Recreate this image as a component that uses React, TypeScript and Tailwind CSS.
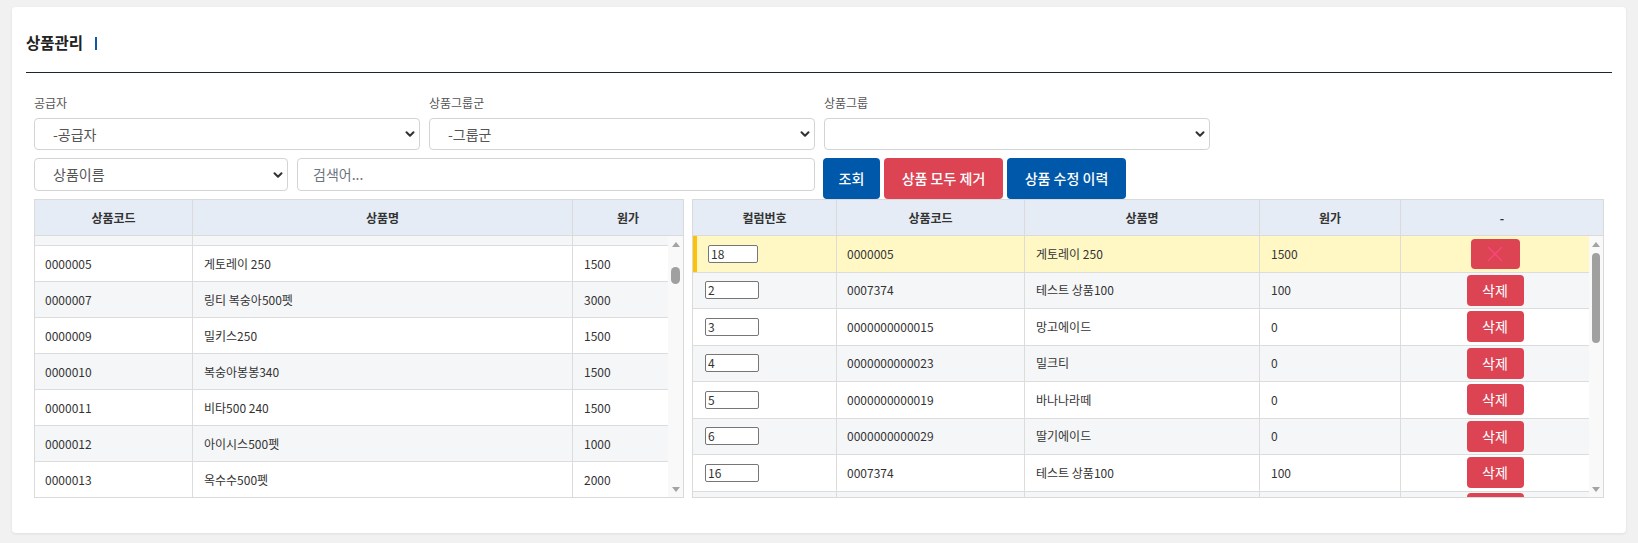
import React from 'react';
import { ChevronDown, X } from 'lucide-react';

const font = { fontFamily: '"Noto Sans CJK KR", "Noto Sans", sans-serif' };

const products = [
  { code: '0000005', name: '게토레이 250', price: '1500' },
  { code: '0000007', name: '링티 복숭아500펫', price: '3000' },
  { code: '0000009', name: '밀키스250', price: '1500' },
  { code: '0000010', name: '복숭아봉봉340', price: '1500' },
  { code: '0000011', name: '비타500 240', price: '1500' },
  { code: '0000012', name: '아이시스500펫', price: '1000' },
  { code: '0000013', name: '옥수수500펫', price: '2000' },
];

const selected = [
  { no: '2', code: '0007374', name: '테스트 상품100', price: '100' },
  { no: '3', code: '0000000000015', name: '망고에이드', price: '0' },
  { no: '4', code: '0000000000023', name: '밀크티', price: '0' },
  { no: '5', code: '0000000000019', name: '바나나라떼', price: '0' },
  { no: '6', code: '0000000000029', name: '딸기에이드', price: '0' },
  { no: '16', code: '0007374', name: '테스트 상품100', price: '100' },
];

function FakeSelect({ text, width }: { text: string; width: string }) {
  return (
    <div className={`${width} h-[32px] shrink-0 flex items-center justify-between border border-[#d4d4d4] rounded-[4px] bg-white pl-[18px] pr-[2px]`}>
      <span className="text-[14px] text-[#555]">{text}</span>
      <ChevronDown size={14} strokeWidth={3.5} className="text-[#333]" />
    </div>
  );
}

function Scrollbar({ thumbTop, thumbHeight, thumbWidth, width }: { thumbTop: string; thumbHeight: string; thumbWidth: string; width: string }) {
  return (
    <div className={`${width} h-full shrink-0 flex flex-col items-center bg-[#f9f9f9]`}>
      <div className="h-[16px] flex items-center justify-center">
        <div className="w-0 h-0 border-l-[4px] border-r-[4px] border-b-[5px] border-l-transparent border-r-transparent border-b-[#a3a3a3]" />
      </div>
      <div className={`${thumbTop} ${thumbHeight} ${thumbWidth} rounded-full bg-[#a0a0a0]`} />
      <div className="flex-1" />
      <div className="h-[16px] flex items-center justify-center">
        <div className="w-0 h-0 border-l-[4px] border-r-[4px] border-t-[5px] border-l-transparent border-r-transparent border-t-[#a3a3a3]" />
      </div>
    </div>
  );
}

function LeftTable() {
  return (
    <div className="w-[650px] shrink-0 h-[299px] border border-[#dadada] bg-white flex flex-col">
      <div className="h-[36px] shrink-0 flex bg-[#e5ecf5] border-b border-[#dadada] text-[12px] font-bold text-[#333]">
        <div className="w-[158px] flex items-center justify-center border-r border-[#dadada]">상품코드</div>
        <div className="w-[380px] flex items-center justify-center border-r border-[#dadada]">상품명</div>
        <div className="flex-1 flex items-center justify-center">원가</div>
      </div>
      <div className="h-[261px] flex overflow-hidden">
        <div className="flex-1 flex flex-col overflow-hidden">
          <div className="h-[10px] shrink-0 flex bg-[#f5f6f8] border-b border-[#dcdcdc]">
            <div className="w-[158px] border-r border-[#dcdcdc]" />
            <div className="w-[380px] border-r border-[#dcdcdc]" />
            <div className="flex-1" />
          </div>
          {products.map((p, i) => (
            <div key={p.code} className={`h-[36px] shrink-0 flex border-b border-[#dcdcdc] text-[12px] text-[#333] ${i % 2 === 1 ? 'bg-[#f5f6f8]' : 'bg-white'}`}>
              <div className="w-[158px] flex items-center pl-[10px] border-r border-[#dcdcdc]">{p.code}</div>
              <div className="w-[380px] flex items-center pl-[11px] border-r border-[#dcdcdc]">{p.name}</div>
              <div className="flex-1 flex items-center pl-[11px]">{p.price}</div>
            </div>
          ))}
        </div>
        <Scrollbar width="w-[15px]" thumbTop="mt-[15px]" thumbHeight="h-[17px]" thumbWidth="w-[9px]" />
      </div>
    </div>
  );
}

function RightTable() {
  return (
    <div className="flex-1 h-[299px] border border-[#dadada] bg-white flex flex-col">
      <div className="h-[36px] shrink-0 flex bg-[#e5ecf5] border-b border-[#dadada] text-[12px] font-bold text-[#333]">
        <div className="w-[144px] flex items-center justify-center border-r border-[#dadada]">컬럼번호</div>
        <div className="w-[188px] flex items-center justify-center border-r border-[#dadada]">상품코드</div>
        <div className="w-[235px] flex items-center justify-center border-r border-[#dadada]">상품명</div>
        <div className="w-[141px] flex items-center justify-center border-r border-[#dadada]">원가</div>
        <div className="flex-1 flex items-center justify-center">-</div>
      </div>
      <div className="h-[261px] flex overflow-hidden">
        <div className="flex-1 flex flex-col overflow-hidden">
          <div className="h-[36.5px] shrink-0 flex bg-[#fff8c5] border-b border-[#dcdcdc] text-[12px] text-[#333]">
            <div className="w-[144px] flex items-center border-l-[4px] border-l-[#ffc107] pl-[11px] border-r border-[#dcdcdc]">
              <input readOnly value="18" className="w-[50px] h-[18px] px-[2px] text-[12px] border border-[#767676] rounded-[2px] bg-white outline-none" style={font} />
            </div>
            <div className="w-[188px] flex items-center pl-[10px] border-r border-[#dcdcdc]">0000005</div>
            <div className="w-[235px] flex items-center pl-[11px] border-r border-[#dcdcdc]">게토레이 250</div>
            <div className="w-[141px] flex items-center pl-[11px] border-r border-[#dcdcdc]">1500</div>
            <div className="flex-1 flex items-center justify-center">
              <button className="w-[49px] h-[30px] rounded-[4px] bg-[#dc4454] flex items-center justify-center">
                <X size={26} strokeWidth={1.3} className="text-[#f7467e]" />
              </button>
            </div>
          </div>
          {selected.map((r, i) => (
            <div key={r.no} className={`h-[36.5px] shrink-0 flex border-b border-[#dcdcdc] text-[12px] text-[#333] ${i % 2 === 0 ? 'bg-[#f5f6f8]' : 'bg-white'}`}>
              <div className="w-[144px] flex items-center pl-[12px] border-r border-[#dcdcdc]">
                <input readOnly value={r.no} className="w-[54px] h-[18px] px-[2px] text-[12px] border border-[#767676] rounded-[2px] bg-white outline-none" style={font} />
              </div>
              <div className="w-[188px] flex items-center pl-[10px] border-r border-[#dcdcdc]">{r.code}</div>
              <div className="w-[235px] flex items-center pl-[11px] border-r border-[#dcdcdc]">{r.name}</div>
              <div className="w-[141px] flex items-center pl-[11px] border-r border-[#dcdcdc]">{r.price}</div>
              <div className="flex-1 flex items-center justify-center">
                <button className="w-[57px] h-[31px] rounded-[4px] bg-[#dc4454] text-white text-[14px]" style={font}>삭제</button>
              </div>
            </div>
          ))}
          <div className="h-[36.5px] shrink-0 flex bg-[#f5f6f8]">
            <div className="w-[144px] border-r border-[#dcdcdc]" />
            <div className="w-[188px] border-r border-[#dcdcdc]" />
            <div className="w-[235px] border-r border-[#dcdcdc]" />
            <div className="w-[141px] border-r border-[#dcdcdc]" />
            <div className="flex-1 flex justify-center">
              <div className="w-[57px] h-[4px] mt-[1px] rounded-t-[4px] bg-[#dc4454]" />
            </div>
          </div>
        </div>
        <Scrollbar width="w-[14px]" thumbTop="mt-[1px]" thumbHeight="h-[90px]" thumbWidth="w-[8px]" />
      </div>
    </div>
  );
}

export default function App() {
  return (
    <div className="min-h-[543px] bg-[#f1f1f1] pt-[7px] pb-[9px] px-[12px]" style={font}>
      <div className="bg-white rounded-[4px] shadow-[0_1px_3px_rgba(0,0,0,0.08)] px-[14px] pb-[35px]">
        <div className="h-[66px] pt-[25px] border-b border-[#1b2631]">
          <div className="flex items-center h-[22px]">
            <span className="text-[15.5px] font-bold text-[#222]">상품관리</span>
            <span className="ml-[12px] w-[2px] h-[13px] bg-[#0d5aa7]" />
          </div>
        </div>

        <div className="px-2">
          <div className="flex gap-[9px] pt-[21px] mb-[6px] text-[12px] text-[#555] leading-[18px]">
            <div className="w-[386px]">공급자</div>
            <div className="w-[386px]">상품그룹군</div>
            <div className="w-[386px]">상품그룹</div>
          </div>
          <div className="flex gap-[9px]">
            <FakeSelect text="-공급자" width="w-[386px]" />
            <FakeSelect text="-그룹군" width="w-[386px]" />
            <FakeSelect text="" width="w-[386px]" />
          </div>
          <div className="flex items-start mt-[8px]">
            <FakeSelect text="상품이름" width="w-[254px] !h-[33px]" />
            <div className="ml-[9px] w-[518px] h-[33px] flex items-center border border-[#d4d4d4] rounded-[4px] pl-[15px] text-[14px] text-[#6c757d]">
              검색어...
            </div>
            <div className="ml-[8px] flex gap-[4px]">
              <button className="w-[57px] h-[41px] rounded-[4px] bg-[#0058aa] text-white text-[14px] font-medium" style={font}>조회</button>
              <button className="w-[119px] h-[41px] rounded-[4px] bg-[#dc4454] text-white text-[14px] font-medium" style={font}>상품 모두 제거</button>
              <button className="w-[119px] h-[41px] rounded-[4px] bg-[#0058aa] text-white text-[14px] font-medium" style={font}>상품 수정 이력</button>
            </div>
          </div>
          <div className="flex gap-[8px]">
            <LeftTable />
            <RightTable />
          </div>
        </div>
      </div>
    </div>
  );
}
